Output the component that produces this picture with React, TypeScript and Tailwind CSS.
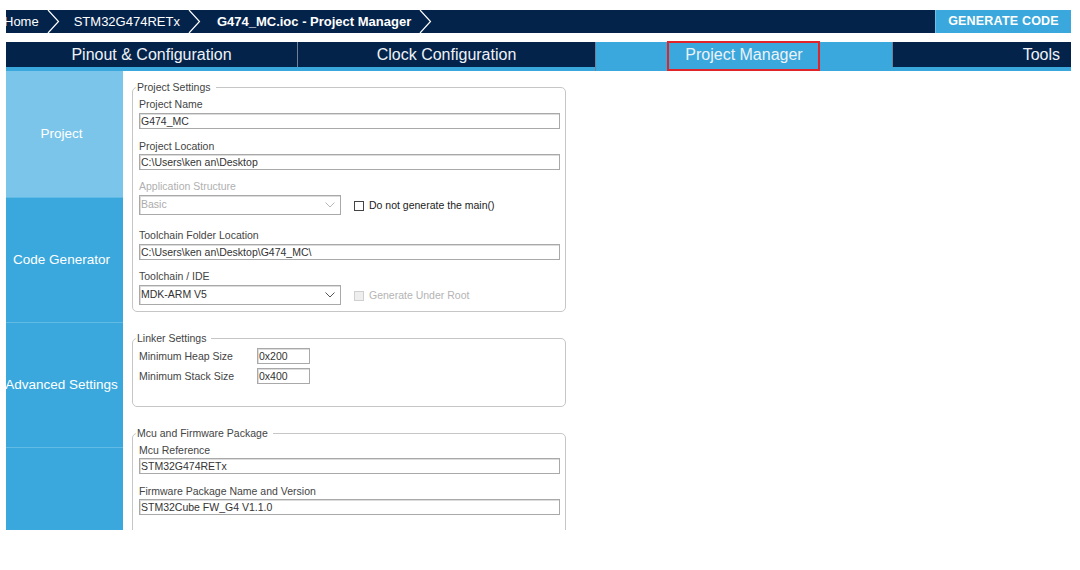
import type { ReactNode } from "react"
import clsx from "clsx"

const NAVY = "bg-[#03234b]"

function Chevron() {
  return (
    <svg width="13" height="23" viewBox="0 0 13 23" className="shrink-0">
      <polyline points="1,0 11.5,11.5 1,23" fill="none" stroke="#ffffff" strokeWidth="1.2" />
    </svg>
  )
}

function TextField({ value, className }: { value: string; className?: string }) {
  return (
    <div
      className={clsx(
        "h-[16px] border border-[#a9a9a9] shadow-[inset_1px_1px_0_#dcdcdc] pl-[1px] text-[10.5px] leading-[14px] text-[#333] whitespace-nowrap overflow-hidden",
        className
      )}
    >
      {value}
    </div>
  )
}

function SelectField({ value, disabled }: { value: string; disabled?: boolean }) {
  return (
    <div
      className={clsx(
        "w-[202px] h-[20px] border border-[#a9a9a9] shadow-[inset_1px_1px_0_#dcdcdc] pl-[1px] pr-[5px] flex items-center justify-between text-[10.5px]",
        disabled ? "text-[#ababab]" : "text-[#333]"
      )}
    >
      <span>{value}</span>
      <svg width="10" height="6" viewBox="0 0 10 6">
        <polyline points="0.5,0.5 5,5 9.5,0.5" fill="none" stroke={disabled ? "#b8b8b8" : "#555"} strokeWidth="1" />
      </svg>
    </div>
  )
}

function Checkbox({ label, disabled }: { label: string; disabled?: boolean }) {
  return (
    <div className="flex items-center gap-[5px] ml-[13px] mt-[1px]">
      <div
        className={clsx(
          "w-[10px] h-[10px] border",
          disabled ? "border-[#cfcfcf] bg-[#eeeeee]" : "border-[#444] bg-white"
        )}
      />
      <span className={clsx("text-[10.5px]", disabled ? "text-[#b4b4b4]" : "text-[#222]")}>{label}</span>
    </div>
  )
}

function Label({ children, disabled, className }: { children: ReactNode; disabled?: boolean; className?: string }) {
  return (
    <div className={clsx("text-[10.5px] leading-[13px]", disabled ? "text-[#b0b0b0]" : "text-[#444]", className)}>
      {children}
    </div>
  )
}

function Group({ title, children, className }: { title: string; children: ReactNode; className?: string }) {
  return (
    <fieldset className={clsx("w-[434px] border border-[#c6c6c6] rounded-[5px] pl-[6px] pr-[5px]", className)}>
      <legend className="-ml-[3px] pl-[1px] pr-[5px] text-[10.5px] leading-[13px] text-[#444]">{title}</legend>
      {children}
    </fieldset>
  )
}

const tabs = [
  { label: "Pinout & Configuration", width: "w-[291px] justify-center" },
  { label: "Clock Configuration", width: "w-[298px] justify-center" },
  { label: "Project Manager", width: "w-[297px] justify-center" },
  { label: "Tools", width: "flex-1 justify-end pr-[11px]" },
]
const sideItems = ["Project", "Code Generator", "Advanced Settings", ""]

export default function App() {
  return (
    <div className="w-[1080px] h-[570px] bg-white pl-[6px] pr-[9px] pt-[10px] font-['Liberation_Sans',Arial,sans-serif] overflow-hidden">
      {/* breadcrumb bar */}
      <div className={clsx(NAVY, "h-[23px] flex items-center text-white text-[13px]")}>
        <span className="font-medium -ml-[2px]">Home</span>
        <div className="ml-[8px]"><Chevron /></div>
        <span className="ml-[14px]">STM32G474RETx</span>
        <div className="ml-[8px]"><Chevron /></div>
        <span className="ml-[16px] font-bold">G474_MC.ioc - Project Manager</span>
        <div className="ml-[8px]"><Chevron /></div>
        <div className="ml-auto h-full w-[136px] bg-[#3aa8dc] border-l border-[#6fc0e8] flex items-center justify-center font-bold text-[12.5px] tracking-[0.2px]">
          GENERATE CODE
        </div>
      </div>

      {/* tabs */}
      <div className="mt-[9px] flex h-[29px] bg-[#3aa8dc]">
        {tabs.map((t, i) => {
          const active = t.label === "Project Manager"
          return (
            <div
              key={t.label}
              className={clsx(
                "relative flex items-center text-[16px] text-[#eef2f7]",
                active ? "bg-[#3aa8dc] h-[29px] pb-[3px]" : clsx(NAVY, "h-[25px] pt-[1px]"),
                t.width,
                i > 0 && "border-l border-[#6f819a]"
              )}
            >
              {t.label}
              {active && (
                <div className="absolute left-[71px] -top-[1px] w-[153px] h-[30px] border-2 border-[#e0242a]" />
              )}
            </div>
          )
        })}
      </div>

      {/* body */}
      <div className="flex h-[459px] overflow-hidden">
        <div className="w-[117px] shrink-0 bg-[#3aa8dc] flex flex-col">
          {sideItems.map((s, i) => (
            <div
              key={i}
              className={clsx(
                "flex items-center justify-center pr-[6px] text-white text-[13.5px] whitespace-nowrap",
                i === 0 ? "h-[126px] bg-[#7cc5ea]" : "h-[125px] border-t border-[#62bbe4]",
                i === 3 && "flex-1"
              )}
            >
              {s}
            </div>
          ))}
        </div>

        <div className="flex-1 pl-[9px] pt-[10px]">
          <Group title="Project Settings" className="pb-[6px]">
            <Label className="mt-[4px]">Project Name</Label>
            <TextField value="G474_MC" className="mt-[2px]" />
            <Label className="mt-[11px]">Project Location</Label>
            <TextField value="C:\Users\ken an\Desktop" className="mt-[1px]" />
            <Label disabled className="mt-[10px]">Application Structure</Label>
            <div className="mt-[2px] flex items-center">
              <SelectField value="Basic" disabled />
              <Checkbox label="Do not generate the main()" />
            </div>
            <Label className="mt-[14px]">Toolchain Folder Location</Label>
            <TextField value="C:\Users\ken an\Desktop\G474_MC\" className="mt-[2px]" />
            <Label className="mt-[10px]">Toolchain / IDE</Label>
            <div className="mt-[2px] flex items-center">
              <SelectField value="MDK-ARM V5" />
              <Checkbox label="Generate Under Root" disabled />
            </div>
          </Group>

          <Group title="Linker Settings" className="mt-[20px] pb-[22px]">
            <div className="mt-[3px] flex items-center">
              <Label className="w-[118px]">Minimum Heap Size</Label>
              <TextField value="0x200" className="w-[53px]" />
            </div>
            <div className="mt-[4px] flex items-center">
              <Label className="w-[118px]">Minimum Stack Size</Label>
              <TextField value="0x400" className="w-[53px]" />
            </div>
          </Group>

          <Group title="Mcu and Firmware Package" className="mt-[20px] pb-[40px]">
            <Label className="mt-[4px]">Mcu Reference</Label>
            <TextField value="STM32G474RETx" className="mt-[1px]" />
            <Label className="mt-[11px]">Firmware Package Name and Version</Label>
            <TextField value="STM32Cube FW_G4 V1.1.0" className="mt-[1px]" />
          </Group>
        </div>
      </div>
    </div>
  )
}
